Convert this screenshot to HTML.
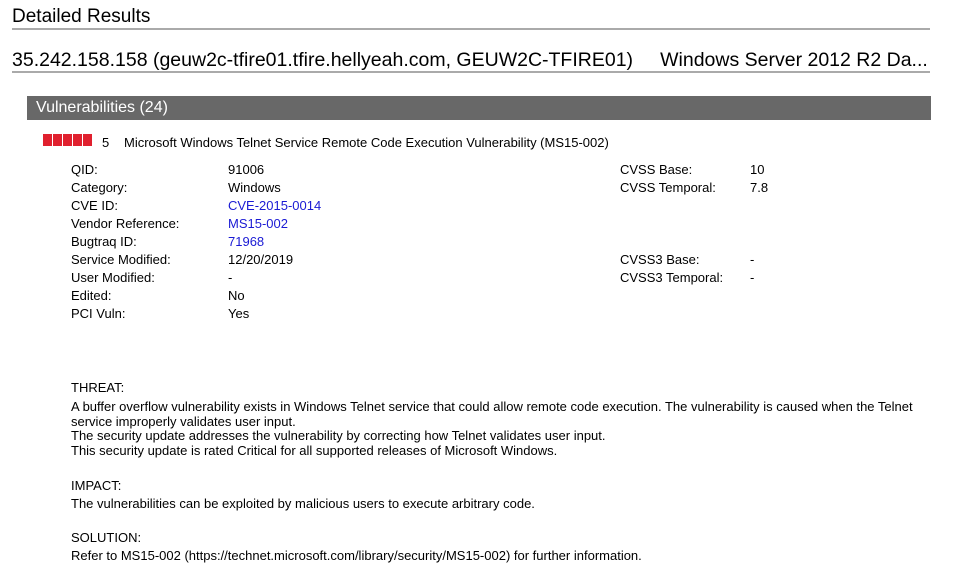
<!DOCTYPE html>
<html><head><meta charset="utf-8"><style>
body{margin:0;background:#fff;font-family:"Liberation Sans",Arial,sans-serif;color:#000;width:956px;height:575px;overflow:hidden;position:relative}
.a{position:absolute;white-space:nowrap}
.s{font-size:13px}
a{color:#1a1ad4;text-decoration:none}
</style></head><body>
<div class="a" style="left:12px;top:6px;font-size:19px">Detailed Results</div>
<div class="a" style="left:12px;top:28px;width:918px;height:2px;background:#aaa"></div>
<div class="a" style="left:12px;top:49px;font-size:19.5px">35.242.158.158 (geuw2c-tfire01.tfire.hellyeah.com, GEUW2C-TFIRE01)&nbsp;&nbsp;&nbsp;&nbsp; Windows Server 2012 R2 Da...</div>
<div class="a" style="left:12px;top:71px;width:918px;height:2px;background:#aaa"></div>
<div class="a" style="left:27px;top:96px;width:904px;height:24px;background:#686868;color:#fff;font-size:16px;line-height:24px;text-indent:9px">Vulnerabilities (24)</div>
<div class="a" style="left:43px;top:134px;display:flex;gap:1px">
<div style="width:9px;height:12px;background:#e0202e"></div><div style="width:9px;height:12px;background:#e0202e"></div><div style="width:9px;height:12px;background:#e0202e"></div><div style="width:9px;height:12px;background:#e0202e"></div><div style="width:9px;height:12px;background:#e0202e"></div></div>
<div class="a s" style="left:102px;top:135px">5</div>
<div class="a s" style="left:124px;top:135px">Microsoft Windows Telnet Service Remote Code Execution Vulnerability (MS15-002)</div>
<div class="a s" style="left:71px;top:161px;line-height:18px">QID:<br>Category:<br>CVE ID:<br>Vendor Reference:<br>Bugtraq ID:<br>Service Modified:<br>User Modified:<br>Edited:<br>PCI Vuln:</div>
<div class="a s" style="left:228px;top:161px;line-height:18px">91006<br>Windows<br><a>CVE-2015-0014</a><br><a>MS15-002</a><br><a>71968</a><br>12/20/2019<br>-<br>No<br>Yes</div>
<div class="a s" style="left:620px;top:161px;line-height:18px">CVSS Base:<br>CVSS Temporal:<br><br><br><br>CVSS3 Base:<br>CVSS3 Temporal:</div>
<div class="a s" style="left:750px;top:161px;line-height:18px">10<br>7.8<br><br><br><br>-<br>-</div>
<div class="a s" style="left:71px;top:380px">THREAT:</div>
<div class="a s" style="left:71px;top:400px;line-height:14.5px">A buffer overflow vulnerability exists in Windows Telnet service that could allow remote code execution. The vulnerability is caused when the Telnet<br>service improperly validates user input.<br>The security update addresses the vulnerability by correcting how Telnet validates user input.<br>This security update is rated Critical for all supported releases of Microsoft Windows.</div>
<div class="a s" style="left:71px;top:478px">IMPACT:</div>
<div class="a s" style="left:71px;top:496px">The vulnerabilities can be exploited by malicious users to execute arbitrary code.</div>
<div class="a s" style="left:71px;top:530px">SOLUTION:</div>
<div class="a s" style="left:71px;top:548px">Refer to MS15-002 (https://technet.microsoft.com/library/security/MS15-002) for further information.</div>
</body></html>
